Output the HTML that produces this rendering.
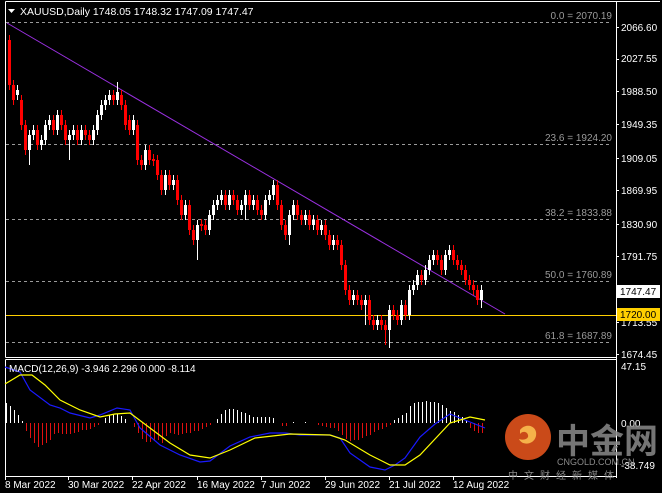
<!DOCTYPE html>
<html><head><meta charset="utf-8"><style>
html,body{margin:0;padding:0;background:#000;width:662px;height:493px;overflow:hidden}
svg{display:block}
text{font-family:"Liberation Sans","Noto Sans CJK SC",sans-serif}
</style></head><body>
<svg width="662" height="493" viewBox="0 0 662 493" xmlns="http://www.w3.org/2000/svg">
<rect width="662" height="493" fill="#000"/>
<!-- frames -->
<path d="M5.5 1.5H660M5.5 1.5V357.5M616.5 1.5V478M5.5 357.5H616.5M5.5 359.5H616.5M5.5 359.5V476.5H616.5" stroke="#fff" fill="none"/>
<!-- fib dashed -->
<g stroke="#9a9a9a" stroke-dasharray="3,3" fill="none">
<path d="M6 22.5H612M6 144.5H612M6 219.5H612M6 281.5H612M6 342.5H612"/>
</g>
<g fill="#9a9a9a" font-size="10" text-anchor="end">
<text x="612" y="19">0.0 = 2070.19</text>
<text x="612" y="141">23.6 = 1924.20</text>
<text x="612" y="216">38.2 = 1833.88</text>
<text x="612" y="278">50.0 = 1760.89</text>
<text x="612" y="339">61.8 = 1687.89</text>
</g>
<!-- yellow hline -->
<path d="M6 315.5H616" stroke="#ffd000"/>
<!-- trendline -->
<path d="M7 23L505 314" stroke="#9a30e0" stroke-width="1"/>
<!-- candles -->
<path fill="#ff0000" d="M8 40h3v45h-3zM9 35h1v55h-1zM12 85h3v15h-3zM13 80h1v25h-1zM20 100h3v25h-3zM21 95h1v35h-1zM24 125h3v25h-3zM25 120h1v35h-1zM36 130h3v15h-3zM37 125h1v25h-1zM52 120h3v10h-3zM53 115h1v20h-1zM60 115h3v10h-3zM61 110h1v20h-1zM64 125h3v15h-3zM65 120h1v25h-1zM76 130h3v10h-3zM77 125h1v20h-1zM84 130h3v5h-3zM85 125h1v15h-1zM88 135h3v5h-3zM89 130h1v15h-1zM112 95h3v5h-3zM113 90h1v15h-1zM120 95h3v10h-3zM121 90h1v20h-1zM124 105h3v20h-3zM125 100h1v30h-1zM128 120h3v10h-3zM129 115h1v20h-1zM136 125h3v35h-3zM137 120h1v45h-1zM140 160h3v5h-3zM141 155h1v15h-1zM148 150h3v10h-3zM149 145h1v20h-1zM152 159h3v2h-3zM153 154h1v12h-1zM156 160h3v15h-3zM157 155h1v25h-1zM160 175h3v15h-3zM161 170h1v25h-1zM168 175h3v10h-3zM169 170h1v20h-1zM176 180h3v20h-3zM177 175h1v30h-1zM180 200h3v15h-3zM181 195h1v25h-1zM188 205h3v25h-3zM189 200h1v35h-1zM192 230h3v10h-3zM193 225h1v20h-1zM200 224h3v2h-3zM201 219h1v12h-1zM204 225h3v5h-3zM205 220h1v15h-1zM224 195h3v10h-3zM225 190h1v20h-1zM232 195h3v5h-3zM233 190h1v15h-1zM236 200h3v10h-3zM237 195h1v20h-1zM248 195h3v10h-3zM249 190h1v20h-1zM256 200h3v10h-3zM257 195h1v20h-1zM260 210h3v5h-3zM261 205h1v15h-1zM276 185h3v20h-3zM277 180h1v30h-1zM280 205h3v20h-3zM281 200h1v30h-1zM284 225h3v10h-3zM285 220h1v20h-1zM296 205h3v10h-3zM297 200h1v20h-1zM300 215h3v5h-3zM301 210h1v15h-1zM308 215h3v10h-3zM309 210h1v20h-1zM316 220h3v10h-3zM317 215h1v20h-1zM324 225h3v10h-3zM325 220h1v20h-1zM328 235h3v10h-3zM329 230h1v20h-1zM336 240h3v5h-3zM337 235h1v15h-1zM340 245h3v20h-3zM341 240h1v30h-1zM344 265h3v25h-3zM345 260h1v35h-1zM348 290h3v10h-3zM349 285h1v20h-1zM356 295h3v5h-3zM357 290h1v15h-1zM360 300h3v5h-3zM361 295h1v15h-1zM368 300h3v20h-3zM369 295h1v30h-1zM372 320h3v5h-3zM373 315h1v15h-1zM380 320h3v5h-3zM381 315h1v15h-1zM384 325h3v5h-3zM385 320h1v25h-1zM392 310h3v5h-3zM393 305h1v15h-1zM396 315h3v5h-3zM397 310h1v15h-1zM404 305h3v10h-3zM405 300h1v20h-1zM420 275h3v5h-3zM421 270h1v15h-1zM436 255h3v5h-3zM437 250h1v15h-1zM440 260h3v10h-3zM441 255h1v20h-1zM452 250h3v10h-3zM453 245h1v20h-1zM456 260h3v5h-3zM457 255h1v15h-1zM460 265h3v5h-3zM461 260h1v15h-1zM464 270h3v10h-3zM465 265h1v20h-1zM468 280h3v5h-3zM469 275h1v15h-1zM472 285h3v5h-3zM473 280h1v15h-1zM476 290h3v10h-3zM477 285h1v20h-1z"/>
<path fill="#ffffff" d="M16 90h3v5h-3zM17 85h1v15h-1zM28 135h3v15h-3zM29 130h1v35h-1zM32 130h3v5h-3zM33 125h1v15h-1zM40 140h3v5h-3zM41 135h1v15h-1zM44 125h3v15h-3zM45 120h1v25h-1zM48 120h3v5h-3zM49 115h1v15h-1zM56 115h3v15h-3zM57 110h1v25h-1zM68 135h3v5h-3zM69 130h1v30h-1zM72 130h3v5h-3zM73 125h1v15h-1zM80 130h3v10h-3zM81 125h1v20h-1zM92 130h3v10h-3zM93 125h1v20h-1zM96 115h3v15h-3zM97 110h1v25h-1zM100 105h3v10h-3zM101 100h1v20h-1zM104 100h3v5h-3zM105 95h1v15h-1zM108 95h3v5h-3zM109 90h1v15h-1zM116 92h3v8h-3zM117 82h1v23h-1zM132 120h3v10h-3zM133 115h1v20h-1zM144 150h3v15h-3zM145 145h1v25h-1zM164 175h3v15h-3zM165 170h1v25h-1zM172 180h3v5h-3zM173 175h1v15h-1zM184 205h3v10h-3zM185 200h1v20h-1zM196 225h3v15h-3zM197 220h1v40h-1zM208 215h3v15h-3zM209 210h1v25h-1zM212 205h3v10h-3zM213 200h1v20h-1zM216 200h3v5h-3zM217 195h1v15h-1zM220 195h3v5h-3zM221 190h1v15h-1zM228 195h3v10h-3zM229 190h1v20h-1zM240 205h3v5h-3zM241 200h1v15h-1zM244 195h3v10h-3zM245 190h1v30h-1zM252 200h3v5h-3zM253 195h1v15h-1zM264 200h3v15h-3zM265 195h1v25h-1zM268 195h3v5h-3zM269 190h1v15h-1zM272 185h3v10h-3zM273 180h1v20h-1zM288 215h3v20h-3zM289 210h1v35h-1zM292 205h3v10h-3zM293 200h1v20h-1zM304 215h3v5h-3zM305 210h1v15h-1zM312 220h3v5h-3zM313 215h1v15h-1zM320 225h3v5h-3zM321 220h1v15h-1zM332 240h3v5h-3zM333 235h1v15h-1zM352 295h3v5h-3zM353 290h1v15h-1zM364 300h3v5h-3zM365 295h1v30h-1zM376 320h3v5h-3zM377 315h1v15h-1zM388 310h3v20h-3zM389 305h1v43h-1zM400 305h3v15h-3zM401 300h1v25h-1zM408 290h3v25h-3zM409 285h1v35h-1zM412 285h3v5h-3zM413 280h1v15h-1zM416 275h3v10h-3zM417 270h1v20h-1zM424 270h3v10h-3zM425 265h1v20h-1zM428 260h3v10h-3zM429 255h1v20h-1zM432 255h3v5h-3zM433 250h1v15h-1zM444 255h3v15h-3zM445 250h1v25h-1zM448 250h3v5h-3zM449 245h1v15h-1zM480 290h3v10h-3zM481 285h1v23h-1z"/>
<!-- title -->
<path d="M8 9h7l-3.5 4z" fill="#fff"/>
<text x="20" y="15" fill="#fff" font-size="10.5">XAUUSD,Daily  1748.05 1748.32 1747.09 1747.47</text>
<!-- price axis -->
<g fill="#fff" font-size="10">
<text x="621" y="31">2066.60</text>
<text x="621" y="62">2027.55</text>
<text x="621" y="95">1988.50</text>
<text x="621" y="128">1949.35</text>
<text x="621" y="162">1909.05</text>
<text x="621" y="194">1869.95</text>
<text x="621" y="228">1830.90</text>
<text x="621" y="260">1791.75</text>
<text x="621" y="293">1752.65</text>
<text x="621" y="326">1713.55</text>
<text x="621" y="358">1674.45</text>
</g>
<path d="M616 27.5h3M616 59.5h3M616 91.5h3M616 124.5h3M616 158.5h3M616 190.5h3M616 224.5h3M616 256.5h3M616 289.5h3M616 322.5h3M616 354.5h3" stroke="#fff"/>
<rect x="617" y="285" width="43" height="13" fill="#fff"/>
<text x="620" y="295" fill="#000" font-size="10">1747.47</text>
<rect x="617" y="308" width="43" height="13" fill="#ffd000"/>
<text x="620" y="318" fill="#000" font-size="10">1720.00</text>
<!-- MACD histogram -->
<path fill="#ffffff" d="M6 403h1v20h-1zM10 406h1v17h-1zM14 410h1v13h-1zM18 415h1v8h-1zM22 421h1v2h-1zM105 418h1v5h-1zM109 415h1v8h-1zM113 414h1v9h-1zM117 414h1v9h-1zM121 416h1v7h-1zM125 419h1v4h-1zM217 419h1v4h-1zM221 414h1v9h-1zM225 410h1v13h-1zM229 409h1v14h-1zM233 409h1v14h-1zM237 410h1v13h-1zM241 412h1v11h-1zM245 413h1v10h-1zM249 415h1v8h-1zM253 417h1v6h-1zM257 417h1v6h-1zM261 417h1v6h-1zM265 417h1v6h-1zM269 417h1v6h-1zM273 418h1v5h-1zM293 422h1v1h-1zM305 422h1v1h-1zM394 420h1v3h-1zM398 418h1v5h-1zM402 415h1v8h-1zM406 413h1v10h-1zM410 406h1v17h-1zM414 403h1v20h-1zM418 402h1v21h-1zM422 402h1v21h-1zM426 401h1v22h-1zM430 402h1v21h-1zM434 402h1v21h-1zM438 403h1v20h-1zM442 405h1v18h-1zM446 408h1v15h-1zM450 411h1v12h-1zM454 412h1v11h-1zM458 415h1v8h-1zM462 417h1v6h-1zM466 420h1v3h-1z"/>
<path fill="#e01010" d="M26 423h1v8h-1zM30 423h1v15h-1zM34 423h1v20h-1zM38 423h1v24h-1zM42 423h1v22h-1zM46 423h1v20h-1zM50 423h1v17h-1zM54 423h1v11h-1zM58 423h1v10h-1zM62 423h1v11h-1zM66 423h1v11h-1zM70 423h1v11h-1zM74 423h1v10h-1zM78 423h1v9h-1zM82 423h1v7h-1zM86 423h1v7h-1zM90 423h1v6h-1zM94 423h1v4h-1zM98 423h1v2h-1zM134 423h1v4h-1zM138 423h1v10h-1zM142 423h1v16h-1zM146 423h1v19h-1zM150 423h1v19h-1zM154 423h1v18h-1zM158 423h1v17h-1zM162 423h1v20h-1zM166 423h1v13h-1zM170 423h1v10h-1zM174 423h1v11h-1zM178 423h1v12h-1zM182 423h1v11h-1zM186 423h1v10h-1zM190 423h1v10h-1zM194 423h1v8h-1zM198 423h1v8h-1zM202 423h1v6h-1zM206 423h1v4h-1zM210 423h1v2h-1zM282 423h1v3h-1zM286 423h1v3h-1zM318 423h1v2h-1zM322 423h1v3h-1zM326 423h1v4h-1zM330 423h1v5h-1zM334 423h1v5h-1zM338 423h1v8h-1zM342 423h1v12h-1zM346 423h1v16h-1zM350 423h1v18h-1zM354 423h1v17h-1zM358 423h1v17h-1zM362 423h1v15h-1zM366 423h1v13h-1zM370 423h1v12h-1zM374 423h1v9h-1zM378 423h1v7h-1zM382 423h1v6h-1zM386 423h1v4h-1zM390 423h1v2h-1zM470 423h1v5h-1zM474 423h1v8h-1zM478 423h1v10h-1zM482 423h1v10h-1z"/>
<!-- MACD lines -->
<polyline fill="none" stroke="#1a1aff" stroke-width="1.2" points="5,367 20,372 30,390 50,405 60,408 70,413 90,418 100,415 117,408 130,410 140,428 160,445 180,455 200,462 210,461 230,446 250,437 270,433 285,433 300,435 330,435 340,438 350,453 370,467 385,470 395,465 405,458 420,437 435,424 450,414 460,418 475,424 485,428"/>
<polyline fill="none" stroke="#ffff00" stroke-width="1.2" points="5,384 20,375 32,375 45,385 60,400 80,410 100,417 115,414 130,413 150,428 170,443 190,455 210,458 230,450 255,438 290,434 330,435 345,440 370,455 390,465 405,465 420,455 450,423 470,417 485,420"/>
<text x="9" y="372" fill="#fff" font-size="10">MACD(12,26,9) -3.946 2.296 0.000 -8.114</text>
<g fill="#fff" font-size="10">
<text x="621" y="370">47.15</text>
<text x="621" y="427">0.00</text>
<text x="621" y="469">-38.749</text>
</g>
<!-- date axis -->
<path d="M5.5 476v4M68.5 476v4M132.5 476v4M197.5 476v4M261.5 476v4M325.5 476v4M389.5 476v4M453.5 476v4" stroke="#fff"/>
<g fill="#fff" font-size="10">
<text x="5" y="488">8 Mar 2022</text>
<text x="68" y="488">30 Mar 2022</text>
<text x="132" y="488">22 Apr 2022</text>
<text x="197" y="488">16 May 2022</text>
<text x="261" y="488">7 Jun 2022</text>
<text x="325" y="488">29 Jun 2022</text>
<text x="389" y="488">21 Jul 2022</text>
<text x="453" y="488">12 Aug 2022</text>
</g>
<!-- watermark -->
<circle cx="528" cy="437" r="23" fill="#e0521c" opacity="0.9"/>
<path d="M520 430c6-8 18-4 16 6c-2 9-14 10-17 3c6 2 10-1 9-4c-1-4-6-4-8-1z" fill="#f5b24a"/>
<text x="556" y="453" fill="#8a8a8a" font-size="34" font-weight="bold" opacity="0.85">中金网</text>
<text x="557" y="465" fill="#8a8a8a" font-size="9">CNGOLD.COM.CN</text>
<text x="508" y="479" fill="#8a8a8a" font-size="10" letter-spacing="6">中文财经新媒体</text>
</svg>
</body></html>
